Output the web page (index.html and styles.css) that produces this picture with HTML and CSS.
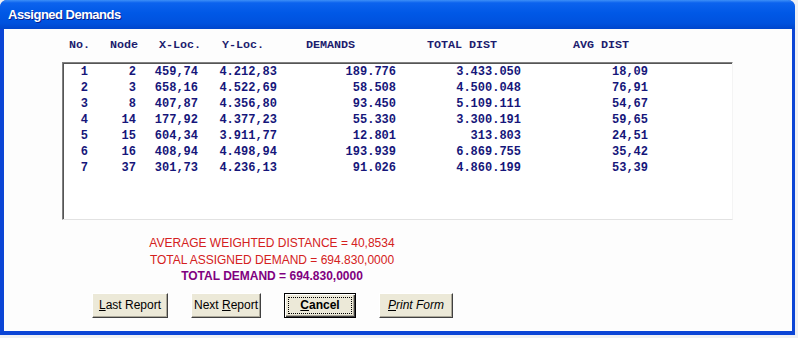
FILE: index.html
```html
<!DOCTYPE html>
<html lang="en">
<head>
  <meta charset="UTF-8" />
  <title>Assigned Demands</title>
  <link rel="stylesheet" href="styles.css">
</head>
<body>

<div class="window">
  <div class="titlebar">
    <span class="title">Assigned Demands</span>
  </div>

  <div class="client">
    <div class="head">
      <span>No.</span>
      <span>Node</span>
      <span>X-Loc.</span>
      <span>Y-Loc.</span>
      <span>DEMANDS</span>
      <span>TOTAL DIST</span>
      <span>AVG DIST</span>
    </div>

    <div class="listbox">
      <div class="row"><span>1</span><span>2</span><span>459,74</span><span>4.212,83</span><span>189.776</span><span>3.433.050</span><span>18,09</span></div>
      <div class="row"><span>2</span><span>3</span><span>658,16</span><span>4.522,69</span><span>58.508</span><span>4.500.048</span><span>76,91</span></div>
      <div class="row"><span>3</span><span>8</span><span>407,87</span><span>4.356,80</span><span>93.450</span><span>5.109.111</span><span>54,67</span></div>
      <div class="row"><span>4</span><span>14</span><span>177,92</span><span>4.377,23</span><span>55.330</span><span>3.300.191</span><span>59,65</span></div>
      <div class="row"><span>5</span><span>15</span><span>604,34</span><span>3.911,77</span><span>12.801</span><span>313.803</span><span>24,51</span></div>
      <div class="row"><span>6</span><span>16</span><span>408,94</span><span>4.498,94</span><span>193.939</span><span>6.869.755</span><span>35,42</span></div>
      <div class="row"><span>7</span><span>37</span><span>301,73</span><span>4.236,13</span><span>91.026</span><span>4.860.199</span><span>53,39</span></div>
    </div>

    <div class="summary">
      <p class="red">AVERAGE WEIGHTED DISTANCE = 40,8534</p>
      <p class="red">TOTAL ASSIGNED DEMAND = 694.830,0000</p>
      <p class="total">TOTAL DEMAND = 694.830,0000</p>
    </div>

    <div class="buttons">
      <button type="button" class="btn btn-last"><u>L</u>ast Report</button>
      <button type="button" class="btn btn-next">Next <u>R</u>eport</button>
      <button type="button" class="btn btn-cancel"><span class="focus"><u>C</u>ancel</span></button>
      <button type="button" class="btn btn-print"><i><u>P</u>rint Form</i></button>
    </div>
  </div>
</div>

</body>
</html>
```

FILE: styles.css
```css
body {
  margin: 0;
  background: #eef0f4;
  font-family: 'Liberation Sans', Arial, sans-serif;
  overflow: hidden;
}
.window {
  width: 795px;
  height: 335px;
  background: #0b45d6;
  border-radius: 7px 7px 0 0;
  box-sizing: border-box;
  display: flex;
  flex-direction: column;
}
.titlebar {
  height: 29px;
  flex: none;
  border-radius: 7px 7px 0 0;
  background: linear-gradient(to bottom, #3d8ff7 0, #0c63ee 10%, #0058e6 45%, #0052de 80%, #0046cc 100%);
  display: flex;
  align-items: center;
  padding-left: 8px;
}
.title {
  color: white;
  font-weight: bold;
  font-size: 13px;
  letter-spacing: -0.5px;
  text-shadow: 1px 1px #0a1f8c;
}
.client {
  flex: 1;
  margin: 0 3px 4px 4px;
  background: #fdfdfd;
}
.head {
  display: grid;
  grid-template-columns: 41px 49px 63px 84px 121px 146px auto;
  margin: 9px 0 0 65px;
  font-family: 'Liberation Mono', 'Courier New', monospace;
  font-weight: bold;
  font-size: 11.7px;
  line-height: 14px;
  color: #1c1c6e;
}
.listbox {
  margin: 10px 0 0 58px;
  width: 671px;
  height: 158px;
  box-sizing: border-box;
  border: 1px solid;
  border-color: #808080 #f4f4f4 #e2e2e2 #808080;
  box-shadow: inset 1px 1px #555;
  background: white;
  padding: 1px 0 0 2px;
}
.row {
  display: grid;
  grid-template-columns: 23px 48px 62px 79px 119px 125px 127px;
  height: 16px;
  line-height: 16px;
  font-family: 'Liberation Mono', 'Courier New', monospace;
  font-weight: bold;
  font-size: 12px;
  color: #16167a;
  text-align: right;
}
.summary {
  width: 536px;
  margin-top: 15px;
  text-align: center;
  font-size: 12px;
  line-height: 16.5px;
}
.summary p {
  margin: 0;
}
.red {
  color: #d42020;
}
.total {
  color: #800080;
  font-weight: bold;
}
.buttons {
  display: flex;
  gap: 23px;
  margin: 8px 0 0 88px;
}
.btn {
  height: 25px;
  padding: 0;
  background: #ece9d8;
  font-family: 'Liberation Sans', Arial, sans-serif;
  font-size: 12px;
  color: #000;
  border: 1px solid;
  border-color: #fff #404040 #404040 #fff;
  box-shadow: inset -1px -1px #aca899;
}
.btn-last { width: 76px; }
.btn-next { width: 70px; }
.btn-print { width: 74px; }
.btn-cancel {
  width: 72px;
  border: 1px solid #000;
  box-shadow: inset 1px 1px #fff, inset -1px -1px #404040, inset -2px -2px #aca899;
  font-weight: bold;
  display: flex;
  padding: 3px;
}
.focus {
  flex: 1;
  border: 1px dotted #000;
  display: flex;
  align-items: center;
  justify-content: center;
}
```
